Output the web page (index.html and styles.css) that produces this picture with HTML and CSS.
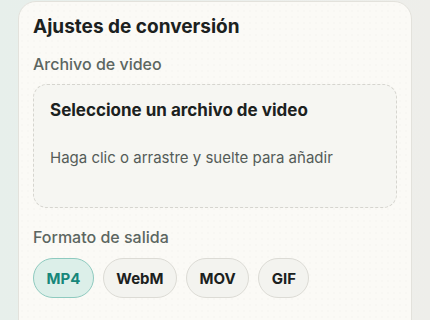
FILE: index.html
```html
<!DOCTYPE html>
<html lang="es">
<head>
<meta charset="utf-8">
<title>Ajustes de conversión</title>
<link rel="stylesheet" href="styles.css">
</head>
<body>
<section class="card">
  <h2 class="card-title">Ajustes de conversión</h2>
  <div class="field">
    <div class="field-label">Archivo de video</div>
    <div class="dropzone">
      <div class="drop-title">Seleccione un archivo de video</div>
      <div class="drop-hint">Haga clic o arrastre y suelte para añadir</div>
    </div>
  </div>
  <div class="field">
    <div class="field-label">Formato de salida</div>
    <div class="pills">
      <button class="pill active">MP4</button>
      <button class="pill">WebM</button>
      <button class="pill">MOV</button>
      <button class="pill">GIF</button>
    </div>
  </div>
</section>
</body>
</html>
```
FILE: styles.css
```css
* { box-sizing: border-box; }
html, body { height: 100%; }
body {
  margin: 0;
  font-family: Inter, "Noto Sans", sans-serif;
  background: linear-gradient(90deg, #e7efeb 0%, #ecefec 60%, #eeeeea 100%);
  overflow: hidden;
}
.card {
  margin: 1px 0 0 18px;
  width: 394px;
  height: 340px;
  background-color: #fbfaf6;
  background-image: radial-gradient(rgba(0,0,0,0.025) 0.6px, transparent 0.8px);
  background-size: 6px 6px;
  border: 1px solid #e3e2dc;
  border-radius: 18px;
  padding: 12px 14px 0;
}
.card-title {
  margin: 0;
  font-size: 19px;
  line-height: 26px;
  font-weight: 700;
  color: #1b2120;
}
.field { margin-top: 14px; }
.field + .field { margin-top: 19px; }
.field-label {
  font-size: 16px;
  line-height: 20px;
  color: #5c6661;
  font-weight: 500;
}
.dropzone {
  margin-top: 10px;
  height: 124px;
  border: 1px dashed #d6d5cf;
  border-radius: 14px;
  background: #f6f6f2;
  padding: 14px 16px;
}
.drop-title {
  font-size: 17px;
  line-height: 22px;
  font-weight: 700;
  color: #1b2120;
}
.drop-hint {
  margin-top: 27px;
  font-size: 15px;
  line-height: 20px;
  color: #545c58;
}
.pills {
  margin-top: 11px;
  display: flex;
  gap: 9px;
}
.pill {
  font-family: inherit;
  height: 40px;
  padding: 0 12.5px;
  border-radius: 20px;
  border: 1px solid #dcdbd5;
  background: #f3f3ef;
  color: #1b2120;
  font-size: 15px;
  font-weight: 700;
}
.pill.active {
  background: #dcefe9;
  border-color: #8ecabf;
  color: #17877a;
}
```
